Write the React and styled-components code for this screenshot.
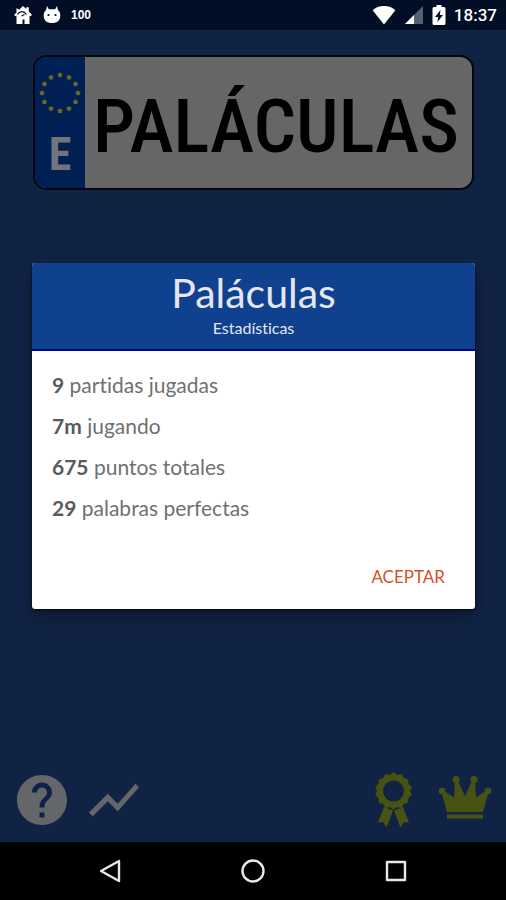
import React from "react";
import styled, { createGlobalStyle } from "styled-components";
import { MdHelp, MdShowChart } from "react-icons/md";

const GlobalStyle = createGlobalStyle`
  * { box-sizing: border-box; }
  body { margin: 0; background: #000; font-family: Roboto, sans-serif; }
  button { padding: 0; border: 0; background: none; font: inherit; cursor: pointer; }
  svg { display: block; }
`;

const Screen = styled.div`
  position: relative;
  display: flex;
  flex-direction: column;
  min-height: 100vh;
  background: #112345;
`;

const StatusBar = styled.header`
  display: flex;
  align-items: center;
  justify-content: space-between;
  height: 30px;
  padding: 0 9px 0 13px;
  background: #010e25;
  color: #fff;
`;

const StatusGroup = styled.div`
  display: flex;
  align-items: center;
  gap: ${(p) => p.$gap}px;
`;

const Notice = styled.span`
  font: 700 12px "Liberation Sans", sans-serif;
`;

const Clock = styled.time`
  font-size: 17px;
  font-weight: 500;
`;

const Main = styled.main`
  flex: 1;
  display: flex;
  flex-direction: column;
  justify-content: space-between;
`;

const Plate = styled.div`
  display: flex;
  height: 135px;
  margin: 25px 32px 0 33px;
  border: 2px solid #02060f;
  border-radius: 14px;
  background: #666;
  overflow: hidden;
`;

const CountryBand = styled.div`
  display: flex;
  flex-direction: column;
  align-items: center;
  gap: 16px;
  width: 50px;
  padding-top: 14px;
  background: #001f53;
`;

const CountryCode = styled.span`
  color: #717478;
  font: 700 46px/46px "Roboto Condensed", Roboto, sans-serif;
`;

const PlateName = styled.h1`
  flex: 1;
  margin: 0;
  padding: 4px 5px 0 0;
  text-align: center;
  white-space: nowrap;
  color: #000;
  font: 500 75px/131px "Roboto Condensed", Roboto, sans-serif;
`;

const Toolbar = styled.nav`
  display: flex;
  justify-content: space-between;
  padding: 0 11px 12px 12px;
`;

const ToolGroup = styled.div`
  display: flex;
  gap: 12px;
`;

const ToolButton = styled.button`
  color: ${(p) => (p.$gold ? "#475411" : "#65666a")};
`;

const Overlay = styled.div`
  position: absolute;
  inset: 30px 0 58px;
  display: flex;
  align-items: center;
  padding: 0 31px 0 32px;
`;

const Dialog = styled.section`
  flex: 1;
  border-radius: 3px;
  overflow: hidden;
  background: #fff;
  box-shadow: 0 1px 2px #000713, 0 8px 20px rgba(0, 0, 0, 0.35);
  font-family: Lato, sans-serif;
  font-variant-ligatures: none;
`;

const DialogHeader = styled.header`
  height: 88px;
  padding-top: 8px;
  border-bottom: 2px solid #00048b;
  background: #10418f;
  color: #e6e6f0;
  text-align: center;
`;

const DialogTitle = styled.h2`
  margin: 0;
  font-size: 41px;
  font-weight: 400;
  line-height: 44px;
`;

const DialogSubtitle = styled.p`
  margin: 0;
  font-size: 16px;
  font-weight: 400;
  line-height: 26px;
`;

const StatList = styled.ul`
  margin: 0;
  padding: 13px 20px 0;
  list-style: none;
  color: #707072;
  font-size: 21px;
  line-height: 41px;

  strong { color: #5a5a5c; }
`;

const DialogActions = styled.footer`
  display: flex;
  justify-content: flex-end;
  padding: 30px 22px 15px;
`;

const AcceptButton = styled.button`
  && { padding: 0 8px; }
  height: 36px;
  color: #d94d27;
  font-size: 17px;
`;

const SystemNav = styled.nav`
  display: flex;
  align-items: center;
  justify-content: space-between;
  height: 58px;
  padding: 0 17%;
  background: #000;
`;

const SystemButton = styled.button`
  width: 48px;
  height: 48px;
  display: grid;
  place-items: center;
`;

const stats = [
  ["9", "partidas jugadas"],
  ["7m", "jugando"],
  ["675", "puntos totales"],
  ["29", "palabras perfectas"],
];

const starPoints = (cx, cy, outer, inner, tips) =>
  Array.from({ length: tips * 2 }, (_, i) => {
    const r = i % 2 ? inner : outer;
    const a = (Math.PI * i) / tips - Math.PI / 2;
    return `${(cx + r * Math.cos(a)).toFixed(2)},${(cy + r * Math.sin(a)).toFixed(2)}`;
  }).join(" ");

const EuroStars = () => (
  <svg width="44" height="44" viewBox="0 0 44 44" fill="#6e6a22" aria-hidden="true">
    {Array.from({ length: 12 }, (_, i) => {
      const a = (Math.PI * i) / 6;
      return <polygon key={i} points={starPoints(22 + 18 * Math.sin(a), 22 - 18 * Math.cos(a), 2.9, 1.9, 5)} />;
    })}
  </svg>
);

const HouseIcon = () => (
  <svg width="20" height="20" viewBox="0 0 20 20" aria-hidden="true">
    <path fill="#fff" d="M10 1l3.200 3V2.300h2.600v4.200L19 10l-1.600 1.300-.9-.8V19h-5v-4.500H9.500V19h-6v-8.500l-.9.8L1 10l2.500-2.600V3l2.600 1.800z" />
    <path fill="none" stroke="#010e25" strokeWidth="1.200" d="M4.500 9.500C7 5.500 11 6 13.500 9.500M8.500 11l3-1.500" />
  </svg>
);

const CatIcon = () => (
  <svg width="18" height="20" viewBox="0 0 18 20" aria-hidden="true">
    <path fill="#fff" d="M4 1l1.800 3.300h6.400L14 1l1 4.200c1.700 1.300 2.300 3 2.300 5.300 0 5-3 7.500-8.300 7.500S.7 15.500.7 10.500C.7 8.200 1.300 6.500 3 5.200z" />
    <circle cx="5.500" cy="10" r="1.100" fill="#010e25" />
    <circle cx="12.500" cy="10" r="1.100" fill="#010e25" />
  </svg>
);

const WifiIcon = () => (
  <svg width="24" height="20" viewBox="0 0 24 20" aria-hidden="true">
    <path fill="#fff" d="M12 19.500L.6 5.200C3.500 2.600 7.500 1 12 1s8.500 1.600 11.400 4.200z" />
  </svg>
);

const SignalIcon = () => (
  <svg width="20" height="20" viewBox="0 0 20 20" aria-hidden="true">
    <path fill="#56606f" d="M19 1v18H1z" />
    <path fill="#fff" d="M10 10v9H1z" />
  </svg>
);

const BatteryIcon = () => (
  <svg width="14" height="20" viewBox="0 0 14 20" aria-hidden="true">
    <path fill="#fff" d="M4.500 0h5v2H12q1.500 0 1.500 1.500v15Q13.500 20 12 20H2Q.5 20 .5 18.500v-15Q.5 2 2 2h2.500z" />
    <path fill="#010e25" d="M8.500 5L3 12h3.200L5.500 17 11 10H7.800z" />
  </svg>
);

const AwardIcon = () => (
  <svg width="60" height="60" viewBox="0 0 60 60" fill="currentColor" aria-hidden="true">
    <polygon points={starPoints(30.5, 21, 18.2, 16, 14)} stroke="currentColor" strokeWidth="1" strokeLinejoin="round" />
    <circle cx="30.500" cy="21" r="10.500" fill="#112345" />
    <path d="M21 37l5 2 4 1.500-6.500 17-3.500-5.500-5 .5zM40 37l-5 2-4 1.500 6.500 17 3.500-5.500 5 .5z" />
  </svg>
);

const CrownIcon = () => (
  <svg width="60" height="60" viewBox="0 0 60 60" fill="currentColor" aria-hidden="true">
    <circle cx="7" cy="21" r="3.300" />
    <circle cx="21" cy="9.500" r="3.500" />
    <circle cx="39" cy="9.500" r="3.500" />
    <circle cx="53" cy="21" r="3.300" />
    <path d="M12 42L6.500 22l2-1.500L19 27.500 20 10h2.500L30 26l7.500-16H40l1 17.500 10.500-7 2 1.500L48 42zM12 44.500h36v4H12z" />
  </svg>
);

const NavShape = ({ children }) => (
  <svg width="26" height="26" viewBox="0 0 26 26" fill="none" stroke="#e8e8e8" strokeWidth="2.400" strokeLinejoin="round" aria-hidden="true">
    {children}
  </svg>
);

export default function App() {
  return (
    <Screen>
      <GlobalStyle />
      <StatusBar>
        <StatusGroup $gap={10}>
          <HouseIcon />
          <CatIcon />
          <Notice>100</Notice>
        </StatusGroup>
        <StatusGroup $gap={8}>
          <WifiIcon />
          <SignalIcon />
          <BatteryIcon />
          <Clock>18:37</Clock>
        </StatusGroup>
      </StatusBar>

      <Main>
        <Plate>
          <CountryBand>
            <EuroStars />
            <CountryCode>E</CountryCode>
          </CountryBand>
          <PlateName>PALÁCULAS</PlateName>
        </Plate>
        <Toolbar>
          <ToolGroup>
            <ToolButton aria-label="Ayuda"><MdHelp size={60} /></ToolButton>
            <ToolButton aria-label="Estadísticas"><MdShowChart size={60} /></ToolButton>
          </ToolGroup>
          <ToolGroup>
            <ToolButton $gold aria-label="Logros"><AwardIcon /></ToolButton>
            <ToolButton $gold aria-label="Clasificación"><CrownIcon /></ToolButton>
          </ToolGroup>
        </Toolbar>
      </Main>

      <SystemNav>
        <SystemButton aria-label="Atrás"><NavShape><path d="M22 3v20L4 13z" /></NavShape></SystemButton>
        <SystemButton aria-label="Inicio"><NavShape><circle cx="13" cy="13" r="10.500" /></NavShape></SystemButton>
        <SystemButton aria-label="Recientes"><NavShape><path d="M4 4h18v18H4z" /></NavShape></SystemButton>
      </SystemNav>

      <Overlay>
        <Dialog role="dialog" aria-labelledby="dialog-title">
          <DialogHeader>
            <DialogTitle id="dialog-title">Paláculas</DialogTitle>
            <DialogSubtitle>Estadísticas</DialogSubtitle>
          </DialogHeader>
          <StatList>
            {stats.map(([value, label]) => (
              <li key={label}><strong>{value}</strong> {label}</li>
            ))}
          </StatList>
          <DialogActions>
            <AcceptButton>ACEPTAR</AcceptButton>
          </DialogActions>
        </Dialog>
      </Overlay>
    </Screen>
  );
}
